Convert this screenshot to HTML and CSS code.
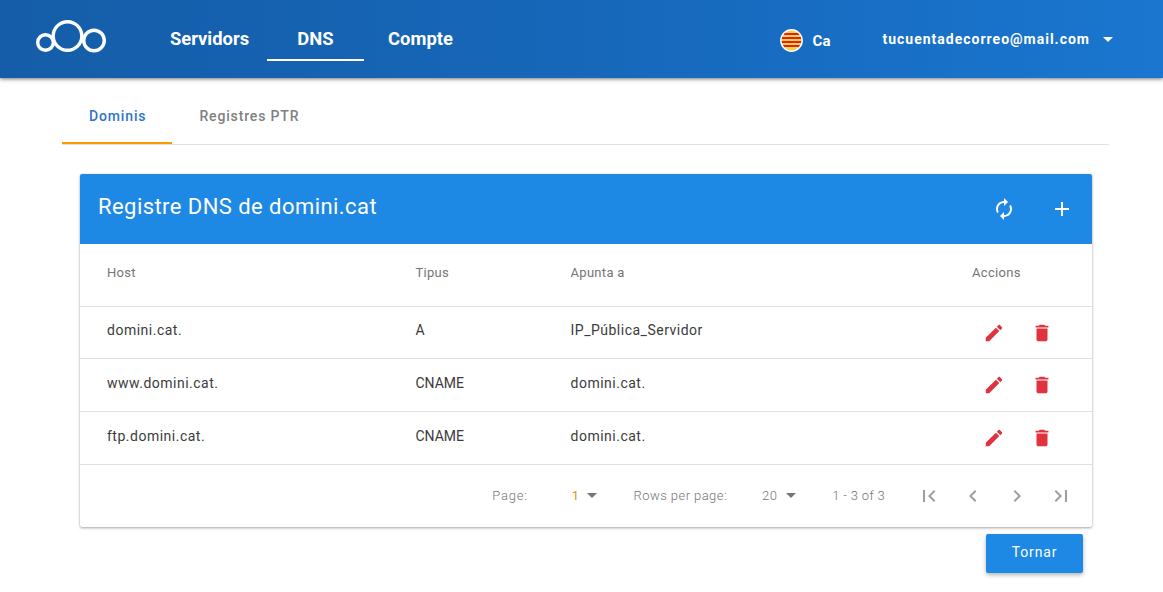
FILE: index.html
```html
<!DOCTYPE html>
<html lang="ca">
<head>
<meta charset="utf-8">
<title>DNS</title>
<link rel="stylesheet" href="styles.css">
</head>
<body>
<header class="topbar">
  <svg class="logo" width="72" height="36" viewBox="0 0 72 36" aria-hidden="true">
    <g fill="none" stroke="#fff" stroke-width="3.4">
      <circle cx="10.5" cy="24.5" r="7.8"/>
      <circle cx="32.5" cy="18" r="14.3"/>
      <circle cx="59" cy="22.5" r="10.3"/>
    </g>
  </svg>
  <nav class="mainnav">
    <a class="navitem">Servidors</a>
    <a class="navitem active">DNS</a>
    <a class="navitem">Compte</a>
  </nav>
  <div class="lang">
    <svg class="flag" width="23" height="23" viewBox="0 0 23 23" aria-hidden="true">
      <defs><clipPath id="fc"><circle cx="11.5" cy="11.5" r="10.5"/></clipPath></defs>
      <g clip-path="url(#fc)">
        <rect width="23" height="23" fill="#fdd23c"/>
        <rect y="4" width="23" height="2" fill="#d5232f"/>
        <rect y="8" width="23" height="2" fill="#d5232f"/>
        <rect y="12" width="23" height="2" fill="#d5232f"/>
        <rect y="16" width="23" height="2" fill="#d5232f"/>
      </g>
      <circle cx="11.5" cy="11.5" r="10.7" fill="none" stroke="#fff" stroke-width="1.4"/>
    </svg>
    <span>Ca</span>
  </div>
  <div class="account">
    <span>tucuentadecorreo@mail.com</span>
    <i class="caret caret-white"></i>
  </div>
</header>

<main class="content">
  <div class="tabs">
    <a class="tab active">Dominis</a>
    <a class="tab">Registres PTR</a>
  </div>

  <section class="card">
    <div class="card-head">
      <h1>Registre DNS de domini.cat</h1>
      <div class="card-tools">
        <svg width="24" height="24" viewBox="0 0 24 24" fill="#fff" aria-hidden="true"><path d="M12 6v3l4-4-4-4v3c-4.42 0-8 3.58-8 8 0 1.57.46 3.03 1.24 4.26L6.7 14.8c-.45-.83-.7-1.79-.7-2.8 0-3.31 2.69-6 6-6zm6.76 1.74L17.3 9.2c.44.84.7 1.79.7 2.8 0 3.31-2.69 6-6 6v-3l-4 4 4 4v-3c4.42 0 8-3.58 8-8 0-1.57-.46-3.03-1.24-4.26z"/></svg>
        <svg width="24" height="24" viewBox="0 0 24 24" fill="#fff" aria-hidden="true"><path d="M19 13h-6v6h-2v-6H5v-2h6V5h2v6h6v2z"/></svg>
      </div>
    </div>

    <div class="row row-head">
      <span>Host</span><span>Tipus</span><span>Apunta a</span><span>Accions</span>
    </div>
    <div class="row">
      <span>domini.cat.</span><span class="col-type">A</span><span>IP_Pública_Servidor</span>
      <span class="actions">
        <svg width="22" height="22" viewBox="0 0 24 24" aria-hidden="true"><path d="M3 17.25V21h3.75L17.81 9.94l-3.75-3.75L3 17.25zM20.71 7.04c.39-.39.39-1.02 0-1.41l-2.34-2.34c-.39-.39-1.02-.39-1.41 0l-1.83 1.83 3.75 3.75 1.83-1.83z"/></svg>
        <svg width="22" height="22" viewBox="0 0 24 24" aria-hidden="true"><path d="M6 19c0 1.1.9 2 2 2h8c1.1 0 2-.9 2-2V7H6v12zM19 4h-3.5l-1-1h-5l-1 1H5v2h14V4z"/></svg>
      </span>
    </div>
    <div class="row">
      <span>www.domini.cat.</span><span class="col-type">CNAME</span><span>domini.cat.</span>
      <span class="actions">
        <svg width="22" height="22" viewBox="0 0 24 24" aria-hidden="true"><path d="M3 17.25V21h3.75L17.81 9.94l-3.75-3.75L3 17.25zM20.71 7.04c.39-.39.39-1.02 0-1.41l-2.34-2.34c-.39-.39-1.02-.39-1.41 0l-1.83 1.83 3.75 3.75 1.83-1.83z"/></svg>
        <svg width="22" height="22" viewBox="0 0 24 24" aria-hidden="true"><path d="M6 19c0 1.1.9 2 2 2h8c1.1 0 2-.9 2-2V7H6v12zM19 4h-3.5l-1-1h-5l-1 1H5v2h14V4z"/></svg>
      </span>
    </div>
    <div class="row">
      <span>ftp.domini.cat.</span><span class="col-type">CNAME</span><span>domini.cat.</span>
      <span class="actions">
        <svg width="22" height="22" viewBox="0 0 24 24" aria-hidden="true"><path d="M3 17.25V21h3.75L17.81 9.94l-3.75-3.75L3 17.25zM20.71 7.04c.39-.39.39-1.02 0-1.41l-2.34-2.34c-.39-.39-1.02-.39-1.41 0l-1.83 1.83 3.75 3.75 1.83-1.83z"/></svg>
        <svg width="22" height="22" viewBox="0 0 24 24" aria-hidden="true"><path d="M6 19c0 1.1.9 2 2 2h8c1.1 0 2-.9 2-2V7H6v12zM19 4h-3.5l-1-1h-5l-1 1H5v2h14V4z"/></svg>
      </span>
    </div>

    <div class="pager">
      <span class="pg-label pg-page-label">Page:</span>
      <span class="pg-select pg-page"><b class="pg-current">1</b><i class="caret"></i></span>
      <span class="pg-label pg-rows">Rows per page:</span>
      <span class="pg-select pg-size"><b>20</b><i class="caret"></i></span>
      <span class="pg-label pg-range">1 - 3 of 3</span>
      <span class="pg-icons">
        <svg width="24" height="24" viewBox="0 0 24 24" aria-hidden="true"><path d="M18.41 16.59L13.82 12l4.59-4.59L17 6l-6 6 6 6zM6 6h2v12H6z"/></svg>
        <svg width="24" height="24" viewBox="0 0 24 24" aria-hidden="true"><path d="M15.41 7.41L14 6l-6 6 6 6 1.41-1.41L10.83 12z"/></svg>
        <svg width="24" height="24" viewBox="0 0 24 24" aria-hidden="true"><path d="M10 6L8.59 7.41 13.17 12l-4.58 4.59L10 18l6-6z"/></svg>
        <svg width="24" height="24" viewBox="0 0 24 24" aria-hidden="true"><path d="M5.59 7.41L10.18 12l-4.59 4.59L7 18l6-6-6-6zM16 6h2v12h-2z"/></svg>
      </span>
    </div>
  </section>

  <div class="bottom">
    <button class="btn" type="button">Tornar</button>
  </div>
</main>
</body>
</html>
```

FILE: styles.css
```css
* { box-sizing: border-box; }
html, body { margin: 0; padding: 0; }
body {
  font-family: Roboto, "Noto Sans", sans-serif;
  background: #fff;
  color: #333;
  height: 592px;
  overflow: hidden;
}

.topbar {
  height: 78px;
  display: flex;
  align-items: flex-start;
  padding-left: 35px;
  color: #fff;
  background: linear-gradient(90deg, #155da8 0%, #1666b8 45%, #1a76cf 100%);
  box-shadow: 0 1px 4px rgba(0, 0, 0, .55);
  position: relative;
}
.logo { margin-top: 18px; flex: none; }
.mainnav { display: flex; margin-left: 60px; margin-top: 17px; }
.navitem {
  width: 97px;
  height: 44px;
  display: flex;
  align-items: center;
  justify-content: center;
  font-size: 18.4px;
  font-weight: 700;
  border-bottom: 2px solid transparent;
}
.navitem:first-child { width: 85px; margin-right: 15px; }
.navitem:nth-child(3) { margin-left: 8px; }
.navitem.active { border-bottom-color: #fff; }
.lang {
  display: flex;
  align-items: center;
  gap: 10px;
  margin-left: auto;
  margin-top: 29px;
  font-size: 15px;
  font-weight: 700;
}
.account {
  display: flex;
  align-items: center;
  gap: 13px;
  margin-left: 52px;
  margin-right: 50px;
  margin-top: 31px;
  font-size: 14px;
  font-weight: 700;
  letter-spacing: 1px;
}

.caret {
  display: inline-block;
  width: 0;
  height: 0;
  border-left: 5.5px solid transparent;
  border-right: 5.5px solid transparent;
  border-top: 5px solid #757575;
}
.caret-white { border-top-color: #fff; }

.content { padding: 0 54px 0 62px; }
.tabs {
  display: flex;
  height: 67px;
  border-bottom: 1px solid #e0e0e0;
}
.tab {
  height: 66px;
  padding: 12px 26px 0 27px;
  display: flex;
  align-items: center;
  font-size: 14px;
  font-weight: 500;
  letter-spacing: .85px;
  color: #808080;
  border-bottom: 2px solid transparent;
}
.tab.active {
  color: #2f75c8;
  border-bottom-color: #ff9800;
}

.card {
  margin: 29px 17px 0 18px;
  height: 353px;
  background: #fff;
  box-shadow: 0 1px 3px rgba(0, 0, 0, .35), 0 0 1px rgba(0, 0, 0, .15);
  border-radius: 2px;
}
.card-head {
  height: 70px;
  background: #1e88e5;
  color: #fff;
  display: flex;
  align-items: center;
  justify-content: space-between;
  padding: 0 18px;
  border-radius: 2px 2px 0 0;
}
.card-head h1 {
  margin: 0 0 6px;
  font-size: 22px;
  font-weight: 400;
  letter-spacing: .44px;
}
.card-tools { display: flex; gap: 34px; }

.row {
  display: grid;
  grid-template-columns: 308.5px 155px 1fr 120px;
  align-items: center;
  height: 53px;
  padding-left: 27px;
  padding-bottom: 5px;
  font-size: 14px;
  letter-spacing: .5px;
  color: #3b3b3b;
  border-bottom: 1px solid #e0e0e0;
}
.row-head {
  height: 63px;
  font-size: 13px;
  letter-spacing: .3px;
  color: #757575;
  padding-bottom: 6px;
}
.row-head + .row { height: 52px; }
.col-type { letter-spacing: 0; }
.actions { display: flex; gap: 25.5px; margin: 5px 0 0 11px; }
.actions svg { fill: #e0323f; }

.pager {
  height: 62px;
  display: flex;
  align-items: center;
  justify-content: flex-end;
  padding-right: 19px;
  padding-bottom: 2px;
  font-size: 13px;
  font-weight: 300;
  color: #757575;
  letter-spacing: .43px;
}
.pg-select { display: inline-flex; align-items: center; gap: 9px; }
.pg-select b { font-weight: 300; }
.pg-select .pg-current { color: #e8912a; font-weight: 400; }
.pg-page-label { letter-spacing: .8px; }
.pg-page { margin-left: 44px; gap: 7px; }
.pg-rows { margin-left: 37px; }
.pg-size { margin-left: 35px; }
.pg-range { margin-left: 36px; letter-spacing: .3px; }
.pg-icons { display: flex; gap: 20px; margin: 2px 0 0 32px; }
.pg-icons svg { fill: #9e9e9e; }

.bottom {
  display: flex;
  justify-content: flex-end;
  margin-top: 7px;
  padding-right: 26px;
}
.btn {
  width: 97px;
  height: 39px;
  border: 0;
  border-radius: 2px;
  background: #1e88e5;
  color: #fff;
  font-family: inherit;
  font-size: 14px;
  letter-spacing: .85px;
  padding: 0 0 4px;
  box-shadow: 0 2px 4px rgba(0, 0, 0, .3);
}
```
